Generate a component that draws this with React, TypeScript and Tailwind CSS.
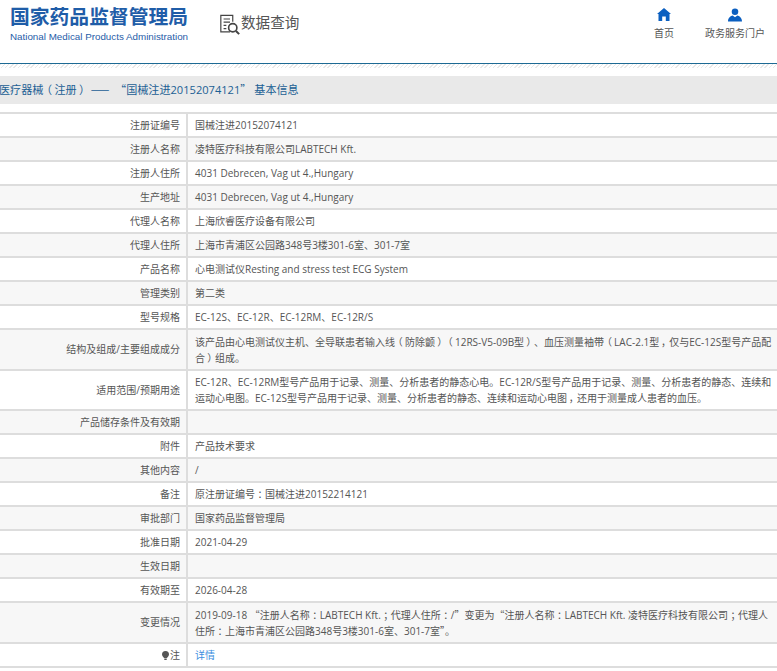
const rows: [string, string, number][] = [
  ["注册证编号", "国械注进20152074121", 24],
  ["注册人名称", "凌特医疗科技有限公司LABTECH Kft.", 24],
  ["注册人住所", "4031 Debrecen, Vag ut 4.,Hungary", 24],
  ["生产地址", "4031 Debrecen, Vag ut 4.,Hungary", 24],
  ["代理人名称", "上海欣睿医疗设备有限公司", 24],
  ["代理人住所", "上海市青浦区公园路348号3楼301-6室、301-7室", 24],
  ["产品名称", "心电测试仪Resting and stress test ECG System", 24],
  ["管理类别", "第二类", 24],
  ["型号规格", "EC-12S、EC-12R、EC-12RM、EC-12R/S", 24],
  ["结构及组成/主要组成成分", "该产品由心电测试仪主机、全导联患者输入线（防除颤）（12RS-V5-09B型）、血压测量袖带（LAC-2.1型，仅与EC-12S型号产品配\n合）组成。", 41],
  ["适用范围/预期用途", "EC-12R、EC-12RM型号产品用于记录、测量、分析患者的静态心电。EC-12R/S型号产品用于记录、测量、分析患者的静态、连续和运动心电图。EC-12S型号产品用于记录、测量、分析患者的静态、连续和运动心电图，还用于测量成人患者的血压。", 40],
  ["产品储存条件及有效期", "", 24],
  ["附件", "产品技术要求", 24],
  ["其他内容", "/", 24],
  ["备注", "原注册证编号：国械注进20152214121", 24],
  ["审批部门", "国家药品监督管理局", 24],
  ["批准日期", "2021-04-29", 24],
  ["生效日期", "", 24],
  ["有效期至", "2026-04-28", 24],
  ["变更情况", "2019-09-18 “注册人名称：LABTECH Kft.；代理人住所：/”变更为“注册人名称：LABTECH Kft. 凌特医疗科技有限公司；代理人住所：上海市青浦区公园路348号3楼301-6室、301-7室”。", 41],
];

function T({ text }: { text: string }) {
  const parts = text.split(/([（）：；，]|[“”—]+)/);
  return (
    <>
      {parts.map((p, i) => {
        if (/^[（）：；，]$/.test(p)) {
          return (
            <span key={i} className="inline-block w-[1em] text-center font-['Noto_Sans_CJK_SC',sans-serif] leading-none [font-feature-settings:'palt']">
              {p}
            </span>
          );
        }
        if (/^[“”—]+$/.test(p)) {
          return (
            <span key={i} className="font-['Noto_Sans_CJK_SC',sans-serif] leading-none">
              {p}
            </span>
          );
        }
        return p;
      })}
    </>
  );
}

export default function App() {
  return (
    <div className="h-[671px] w-[777px] overflow-hidden bg-white font-['Open_Sans','Noto_Sans_CJK_SC',sans-serif] text-[10px] text-[#555]">
      <header className="flex h-[64px] items-start border-b border-[#1d6a94]">
        <div className="ml-[10px] mt-[6px] w-[190px]">
          <div className="whitespace-nowrap text-[19.800px] font-bold leading-[22px] text-[#1f5da8]">国家药品监督管理局</div>
          <div className="mt-[3px] whitespace-nowrap font-['Liberation_Sans',sans-serif] text-[9.800px] leading-[12px] text-[#1f5da8]">National Medical Products Administration</div>
        </div>
        <div className="ml-[19px] mt-[13px] flex items-center">
          <svg width="22" height="23" viewBox="0 0 24 24" fill="none" stroke="#444" strokeWidth="1.3">
            <path d="M12 20H2V2h13v7M5 6h7M5 9.500h7M5 13h3M5 16.500h3" />
            <circle cx="15" cy="15.500" r="4.500" strokeWidth="1.800" />
            <path d="M18.500 19l3.500 3.500" strokeWidth="2.200" />
          </svg>
          <span className="mt-[-5px] text-[14.600px] leading-[22px] text-[#555]">数据查询</span>
        </div>
        <nav className="ml-auto mr-[12px] mt-[8px] flex">
          <div className="flex w-[60px] flex-col items-center">
            <svg width="14" height="13" viewBox="0 0 14 13" fill="#0b5fc0">
              <path d="M7 0L14 6H12.500V13H8.800V8.500H5.200V13H1.500V6H0Z" />
            </svg>
            <span className="mt-[5px] leading-[14px]">首页</span>
          </div>
          <div className="ml-[11px] flex w-[60px] flex-col items-center">
            <svg width="14" height="14" viewBox="0 0 15 14" fill="#0b5fc0">
              <circle cx="7.500" cy="3.500" r="3.500" />
              <path d="M0 14C0 9.500 3 8 5 7.500L7.500 9.500L10 7.500C12 8 15 9.500 15 14Z" />
            </svg>
            <span className="mt-[4px] whitespace-nowrap leading-[14px]">政务服务门户</span>
          </div>
        </nav>
      </header>
      <div className="h-[4px] bg-[repeating-linear-gradient(135deg,#e8e8e8_0,#e8e8e8_1px,#ffffff_1px,#ffffff_3px)]" />
      <div className="mt-[8px] flex h-[28px] items-center overflow-hidden whitespace-nowrap bg-[#e9e9e9] text-[11.100px] text-[#1b5f94]">
        <span className="ml-[-1px]">
          <T text={"医疗器械（注册） —— \u00a0“国械注进20152074121” 基本信息"} />
        </span>
      </div>
      <div className="mt-[8px] border-t-2 border-[#ddd]">
        {rows.map(([label, value, h], i) => (
          <Row key={label} label={label} h={h} odd={i % 2 === 1}>
            <T text={value} />
          </Row>
        ))}
        <Row label="注" h={24} odd={false} icon>
          <span className="text-[#3b8ee0]">详情</span>
        </Row>
      </div>
    </div>
  );
}

function Row({ label, h, odd, icon, children }: { label: string; h: number; odd: boolean; icon?: boolean; children: React.ReactNode }) {
  return (
    <div className={`flex border-b-2 border-[#ddd] ${odd ? "bg-[#f7f7f7]" : "bg-white"}`} style={{ height: h }}>
      <div className="flex w-[188px] shrink-0 items-center justify-end border-r-2 border-[#ddd] pr-[6px]">
        {icon && (
          <svg width="7" height="9" viewBox="0 0 7 9" fill="#555" className="mr-[1px]">
            <path d="M3.500 0A3.500 3.500 0 0 1 7 3.500C7 5 5.500 6 5 7H2C1.500 6 0 5 0 3.500A3.500 3.500 0 0 1 3.500 0ZM2.300 7.600H4.700V9H2.300Z" />
          </svg>
        )}
        {label}
      </div>
      <div className="flex min-w-0 flex-1 items-center pl-[7px] pr-[5px] leading-[16px]">
        <div className="whitespace-pre-line">{children}</div>
      </div>
    </div>
  );
}
